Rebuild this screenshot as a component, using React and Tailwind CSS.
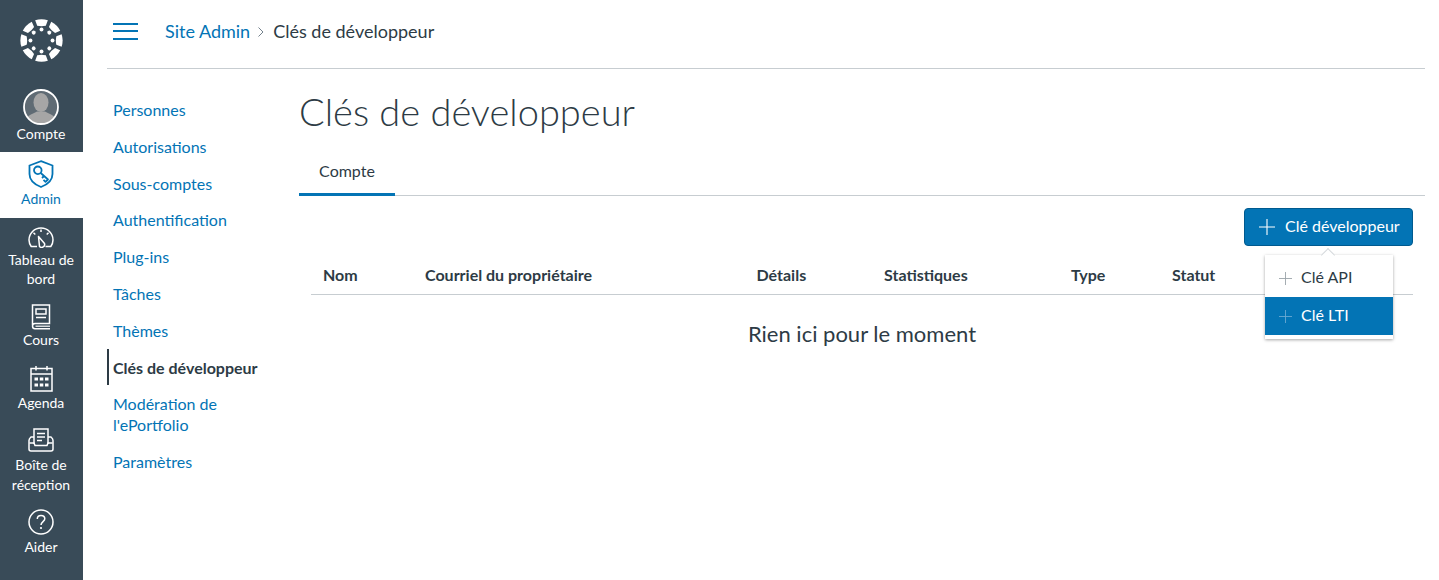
const ANGLES = [0, 45, 90, 135, 180, 225, 270, 315];

function CanvasLogo() {
  return (
    <svg width="43" height="43" viewBox="-22 -22 44 44" fill="#fff">
      {ANGLES.map((a) => (
        <g key={a} transform={`rotate(${a})`}>
          <path d="M-6.5 -20.6A21.6 21.6 0 0 1 6.5 -20.6L4.4 -15.2Q0 -14.2 -4.4 -15.2Z" />
          <circle cx="0" cy="-11.3" r="2" />
        </g>
      ))}
    </svg>
  );
}

function Avatar() {
  return (
    <svg width="36" height="36" viewBox="0 0 36 36">
      <defs>
        <clipPath id="avatar-clip">
          <circle cx="18" cy="18" r="16.5" />
        </clipPath>
      </defs>
      <circle cx="18" cy="18" r="17" fill="#5f6b74" />
      <g clipPath="url(#avatar-clip)" fill="#a6a6a6">
        <ellipse cx="18" cy="13.500" rx="7.500" ry="9.500" />
        <path d="M1 36C1 27 9 25.500 14 22.500L22 22.500C27 25.500 35 27 35 36Z" />
      </g>
      <circle cx="18" cy="18" r="17" fill="none" stroke="#fff" strokeWidth="1.800" />
    </svg>
  );
}

function AdminIcon() {
  return (
    <svg width="26" height="28" viewBox="0 0 26 28" fill="none" stroke="#0374b5" strokeWidth="1.800">
      <path d="M13 1.200L24.500 5.500V14C24.500 20 19.500 24.500 13 27C6.500 24.500 1.500 20 1.500 14V5.500Z" />
      <circle cx="9.800" cy="10.300" r="3.800" />
      <path d="M12.700 13L20 19.500L17.500 21.800L15.500 19.800M16 16L14 18" strokeLinejoin="round" />
    </svg>
  );
}

function DashboardIcon() {
  return (
    <svg width="26" height="21" viewBox="0 0 26 21" fill="none" stroke="#fff" strokeWidth="1.500">
      <path d="M9 19.500H3.200C1.800 17.500 1 15.500 1 13C1 6.400 6.400 1 13 1S25 6.400 25 13C25 15.500 24.200 17.500 22.800 19.500H17.500" />
      <path d="M10.500 9.500L16.500 16.500A3 3 0 0 1 11.500 19.500Z" strokeLinejoin="round" />
      <path d="M13 2.500V5M5.500 5.800L7.300 7.500M20.500 5.800L18.700 7.500" />
    </svg>
  );
}

function CoursesIcon() {
  return (
    <svg width="20" height="26" viewBox="0 0 20 26" fill="none" stroke="#fff" strokeWidth="1.500">
      <path d="M1.500 21V1H18.500V19.500H4C2.500 19.500 1.500 20.500 1.500 22S2.500 24.800 4 24.800H19" />
      <path d="M4.500 22.200H19" strokeWidth="1.200" />
      <rect x="5" y="5" width="10" height="5" />
      <path d="M5 13.500H15" />
    </svg>
  );
}

function CalendarIcon() {
  return (
    <svg width="23" height="26" viewBox="0 0 23 26" fill="none" stroke="#fff" strokeWidth="1.500">
      <rect x="1" y="2.500" width="21" height="22.500" />
      <path d="M1 8H22M6 0V4.500M17 0V4.500" />
      <g fill="#fff" stroke="none">
        <rect x="4.500" y="11.500" width="3.500" height="3" />
        <rect x="9.800" y="11.500" width="3.500" height="3" />
        <rect x="15" y="11.500" width="3.500" height="3" />
        <rect x="4.500" y="17.500" width="3.500" height="3" />
        <rect x="9.800" y="17.500" width="3.500" height="3" />
        <rect x="15" y="17.500" width="3.500" height="3" />
      </g>
    </svg>
  );
}

function InboxIcon() {
  return (
    <svg width="26" height="24" viewBox="0 0 26 24" fill="none" stroke="#fff" strokeWidth="1.500">
      <path d="M6 16V1H20V16" />
      <path d="M6 9H3C1.800 10 1 11 1 12.500V21C1 22.200 1.800 23 3 23H23C24.200 23 25 22.200 25 21V12.500C25 11 24.200 10 23 9H20" />
      <path d="M1.500 15H6L7 17.500H19L20 15H24.500" />
      <path d="M9 5.500H17M9 9H17M9 12.500H14" />
    </svg>
  );
}

function HelpIcon() {
  return (
    <svg width="26" height="26" viewBox="0 0 26 26" fill="none" stroke="#fff" strokeWidth="1.500">
      <circle cx="13" cy="13" r="12" />
      <path d="M9.300 10C9.300 7.800 11 6.500 13 6.500S16.800 7.800 16.800 9.800C16.800 12.500 13 12.800 13 16" />
      <circle cx="13" cy="19" r="1.100" fill="#fff" stroke="none" />
    </svg>
  );
}

function PlusIcon({ size, color }) {
  return (
    <svg width={size} height={size} viewBox="0 0 16 16" fill="none" stroke={color} strokeWidth="1.100">
      <path d="M8 0V16M0 8H16" />
    </svg>
  );
}

const globalNav = [
  { label: ["Compte"], icon: <Avatar />, box: "h-[68px] pt-[5px]", iconBox: "h-9", gap: "mt-[-1px]" },
  { label: ["Admin"], icon: <AdminIcon />, box: "h-[66px] pt-[8px] bg-white text-[#0374b5]", iconBox: "h-7", gap: "mt-[1px]" },
  { label: ["Tableau de", "bord"], icon: <DashboardIcon />, box: "h-[76px] pt-[9px]", iconBox: "h-[21px]", gap: "mt-[1.500px]" },
  { label: ["Cours"], icon: <CoursesIcon />, box: "h-[62px] pt-[10px]", iconBox: "h-[26px]", gap: "mt-[0px]" },
  { label: ["Agenda"], icon: <CalendarIcon />, box: "h-[63px] pt-[10px]", iconBox: "h-[26px]", gap: "mt-[1px]" },
  { label: ["Boîte de", "réception"], icon: <InboxIcon />, box: "h-[81px] pt-[9px]", iconBox: "h-[24px]", gap: "mt-[3px]" },
  { label: ["Aider"], icon: <HelpIcon />, box: "h-[63px] pt-[9px]", iconBox: "h-[26px]", gap: "mt-[2px]" },
];

const adminNav = [
  "Personnes",
  "Autorisations",
  "Sous-comptes",
  "Authentification",
  "Plug-ins",
  "Tâches",
  "Thèmes",
  "Clés de développeur",
  "Modération de l'ePortfolio",
  "Paramètres",
];

const columns = [
  ["Nom", "w-[102px]"],
  ["Courriel du propriétaire", "w-[331.500px]"],
  ["Détails", "w-[127.500px]"],
  ["Statistiques", "w-[187px]"],
  ["Type", "w-[101px]"],
  ["Statut", "w-[100px]"],
];

export default function App() {
  const active = "Clés de développeur";

  return (
    <div className="flex h-[580px] overflow-hidden bg-white font-['Lato',sans-serif] text-[#2d3b45]">
      {/* Global nav */}
      <div className="w-[83px] shrink-0 bg-[#394b58] text-white">
        <div className="flex h-[84px] items-center justify-center pb-[3px] pr-[1px]">
          <CanvasLogo />
        </div>
        {globalNav.map((item) => (
          <div key={item.label[0]} className={`flex flex-col items-center pr-[1px] ${item.box}`}>
            <div className={`flex items-center justify-center ${item.iconBox}`}>{item.icon}</div>
            <div className={`text-center text-sm leading-[19.6px] ${item.gap}`}>
              {item.label.map((line) => (
                <div key={line}>{line}</div>
              ))}
            </div>
          </div>
        ))}
      </div>

      <div className="ml-[24px] w-[1318px] shrink-0">
        {/* Breadcrumb */}
        <div className="flex h-[69px] items-center border-b border-[#c7cdd1] pb-[6px] text-lg">
          <div className="ml-[6px] flex h-[17px] w-[25px] flex-col justify-between">
            <div className="h-[2px] bg-[#0374b5]"></div>
            <div className="h-[2px] bg-[#0374b5]"></div>
            <div className="h-[2px] bg-[#0374b5]"></div>
          </div>
          <span className="ml-[27px] text-[#0374b5]">Site Admin</span>
          <svg className="ml-[8px] mr-[9px] mt-[2px]" width="6" height="10" viewBox="0 0 6 10" fill="none" stroke="#73818c" strokeWidth="1">
            <path d="M0.500 0.500L5 5L0.500 9.500" />
          </svg>
          <span>Clés de développeur</span>
        </div>

        <div className="flex">
          {/* Admin nav */}
          <div className="w-[192px] shrink-0 pt-[22.200px] text-base">
            {adminNav.map((item) => (
              <div
                key={item}
                className={
                  item === active
                    ? "w-[160px] border-l-2 border-[#2d3b45] py-[7.900px] pl-[4px] leading-[21px] font-bold text-[#2d3b45] whitespace-nowrap"
                    : "w-[150px] py-[7.900px] pl-[6px] leading-[21px] text-[#0374b5]"
                }
              >
                {item}
              </div>
            ))}
          </div>

          {/* Content */}
          <div className="min-w-0 flex-1">
            <h1 className="mt-[17px] text-[38px] font-light leading-[50px]">Clés de développeur</h1>
            <div className="mt-[17px] flex h-[43px] border-b border-[#c7cdd1]">
              <div className="h-[43px] w-[96px] border-b-[3px] border-[#0374b5] pt-[8px] text-center text-base leading-5">
                Compte
              </div>
            </div>
            <div className="relative mt-[12px] flex justify-end pr-[12px]">
              <div className="flex h-[38px] w-[169px] items-center rounded-[4px] border border-[#005a8f] bg-[#0374b5] pl-[14px] text-base text-white">
                <PlusIcon size={16} color="#fff" />
                <span className="ml-[10px] mb-[2px]">Clé développeur</span>
              </div>
              {/* Dropdown */}
              <div className="absolute right-[32px] top-[47px] z-10 w-[128px] bg-white py-[4px] shadow-[0_1px_3px_rgba(0,0,0,0.35)]">
                <div className="absolute left-[58px] top-[-5px] h-[10px] w-[10px] rotate-45 border-l border-t border-[#d5d9dc] bg-white"></div>
                <div className="relative flex h-[38px] items-center pl-[14px] text-base">
                  <PlusIcon size={13} color="#9aa3a9" />
                  <span className="ml-[9px] mb-[2px]">Clé API</span>
                </div>
                <div className="relative flex h-[38px] items-center bg-[#0374b5] pl-[14px] text-base text-white">
                  <PlusIcon size={13} color="#6aa9d2" />
                  <span className="ml-[9px] mb-[2px]">Clé LTI</span>
                </div>
              </div>
            </div>
            <div className="ml-[12px] mr-[12px] mt-[9px] flex h-[40px] items-center border-b border-[#c7cdd1] text-base font-bold">
              {columns.map(([name, width]) => (
                <div key={name} className={`${width} pl-[12px]`}>
                  {name}
                </div>
              ))}
            </div>
            <div className="ml-[12px] mr-[12px] mt-[23px] text-center text-[22px] leading-[32px]">Rien ici pour le moment</div>
          </div>
        </div>
      </div>
    </div>
  );
}
